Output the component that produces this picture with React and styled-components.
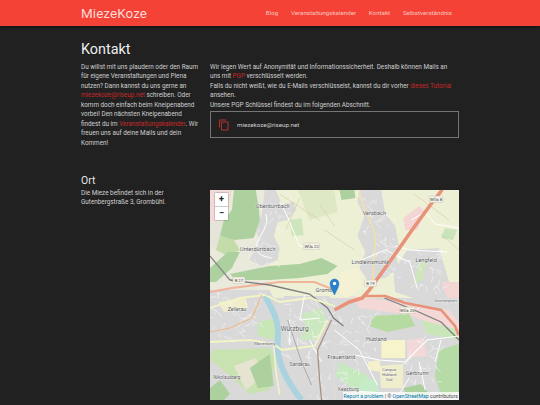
import React from 'react'
import styled, { createGlobalStyle } from 'styled-components'

const GlobalStyle = createGlobalStyle`
  html, body {
    margin: 0;
    padding: 0;
    background: #212121;
    overflow: hidden;
  }
  body {
    font-family: Roboto, "Liberation Sans", sans-serif;
  }
`

const navItems = ['Blog', 'Veranstaltungskalender', 'Kontakt', 'Selbstverständnis']

export default function App() {
  return (
    <Page>
      <GlobalStyle />
      <Header>
        <HeaderInner>
          <Brand>MiezeKoze</Brand>
          <Nav>
            {navItems.map(item => <NavLink key={item}>{item}</NavLink>)}
          </Nav>
        </HeaderInner>
      </Header>

      <Section>
        <Title>Kontakt</Title>
        <Copy>
          Du willst mit uns plaudern oder den Raum für eigene Veranstaltungen und Plena
          nutzen? Dann kannst du uns gerne an <Link>miezekoze@riseup.net</Link> schreiben.
          Oder komm doch einfach beim Kneipenabend vorbei! Den nächsten Kneipenabend
          findest du im <Link>Veranstaltungskalender</Link>. Wir freuen uns auf deine
          Mails und dein Kommen!
        </Copy>
        <div>
          <Copy>
            Wir legen Wert auf Anonymität und Informationssicherheit. Deshalb können Mails an
            uns mit <Link>PGP</Link> verschlüsselt werden.<br />
            Falls du nicht weißt, wie du E-Mails verschlüsselst, kannst du dir vorher <Link>dieses Tutorial</Link> ansehen.<br />
            Unsere PGP Schlüssel findest du im folgenden Abschnitt.
          </Copy>
          <KeyBox>
            <CopyIcon viewBox="0 0 24 24">
              <path d="M16 1H4c-1.1 0-2 .9-2 2v14h2V3h12V1zm3 4H8c-1.1 0-2 .9-2 2v14c0 1.1.9 2 2 2h11c1.1 0 2-.9 2-2V7c0-1.1-.9-2-2-2zm0 16H8V7h11v14z" />
            </CopyIcon>
            <KeyText>miezekoze@riseup.net</KeyText>
          </KeyBox>
        </div>
      </Section>

      <OrtSection>
        <SubTitle>Ort</SubTitle>
        <Copy>Die Mieze befindet sich in der Gutenbergstraße 3, Grombühl.</Copy>
        <MapBox>
          <OsmMap />
          <ZoomControl>
            <ZoomButton>+</ZoomButton>
            <ZoomButton>−</ZoomButton>
          </ZoomControl>
          <Attribution>
            <a>Report a problem</a> | © <a>OpenStreetMap</a> contributors
          </Attribution>
        </MapBox>
      </OrtSection>
    </Page>
  )
}

// flat map areas, page coordinates minus map origin
const areas = [
  ['#eef0d5', 'M60 0H250V110H60Z'],
  ['#dfe8c4', 'M88 0L125 0L128 22L100 30Z'],
  ['#f2dad9', 'M0 0H22L16 30L0 32Z'],
  ['#e4e4d8', 'M0 32L14 30L22 50L8 60L0 56Z'],
  ['#d9d9d9', 'M55 0H66L72 14L84 12L86 20L78 30L68 32L64 46L50 50L46 40L52 24Z'],
  ['#d9d9d9', 'M50 50L64 46L70 58L68 70L52 76L40 70L44 58Z'],
  ['#add19e', 'M24 0H46L49 18L50 30L44 48L24 50L10 46L14 30L22 20Z'],
  ['#c3dcaa', 'M10 46L24 50L30 60L18 66L6 60Z'],
  ['#add19e', 'M0 78L18 62L30 62L22 78L6 92L0 92Z'],
  ['#add19e', 'M20 84L60 76L90 74L112 68L128 76L118 84L90 88L60 90L26 90Z'],
  ['#cfe5bd', 'M80 30L92 28L94 45L82 46Z'],
  ['#d9d9d9', 'M150 0H172L176 24L186 36L190 58L172 70L156 62L148 46L155 26L148 12Z'],
  ['#d9d9d9', 'M156 62L186 62L190 78L176 88L158 90L150 78Z'],
  ['#d9d9d9', 'M198 60L230 58L236 78L240 92L250 100V108L210 110L186 102L184 82Z'],
  ['#f3d5d3', 'M194 28L210 16L216 22L208 40L196 40Z'],
  ['#f3d5d3', 'M232 92L250 92V108L238 108Z'],
  ['#add19e', 'M130 0H145L146 8L132 10Z'],
  ['#cfe5bd', 'M210 72L218 68L214 90L204 94Z'],
  ['#c9e3bb', 'M236 38L248 40L244 50L232 48Z'],
  ['#f4f1d4', 'M132 82L150 78L152 98L136 108L128 100Z'],
  ['#d9d9d9', 'M0 100H60L64 108H125V210H0Z'],
  ['#d9d9d9', 'M125 108H250V210H125Z'],
  ['#f3d8d5', 'M140 106L190 112L240 120L250 132V145L200 125L150 118Z'],
  ['#d9d9d9', 'M74 106H120L128 128L122 180L104 210H92L76 170L74 140Z'],
  ['#cbe8c0', 'M92 124L112 118L118 132L106 150L90 150L96 136Z'],
  ['#f0eeca', 'M8 112L36 108L38 118L14 122Z'],
  ['#c9e6b6', 'M48 132L68 128L66 150L48 146Z'],
  ['#c8e2b0', 'M2 160L60 158L66 170L60 200L40 204L18 184L0 170Z'],
  ['#e6e4d0', 'M24 176L46 168L54 186L36 200Z'],
  ['#add19e', 'M40 178L60 164L64 196L48 198Z'],
  ['#add19e', 'M0 198L10 190L20 204L14 210H0Z'],
  ['#b6dba0', 'M164 126L200 124L206 136L178 142L160 136Z'],
  ['#c8e6b8', 'M212 130L250 140V150L218 144Z'],
  ['#f7f3cb', 'M172 150H196V168H172Z'],
  ['#f3d8d8', 'M198 150L214 148L218 166L198 168Z'],
  ['#f0edcd', 'M170 176L194 174L194 198L172 198Z'],
  ['#f4f1cc', 'M158 172L170 170L172 182L160 180Z'],
  ['#b7dba6', 'M230 160L250 154V202L232 206L226 186Z'],
  ['#c6ebc8', 'M150 188L168 190L170 206L148 206Z'],
  ['#c6e9c0', 'M130 172L160 186L145 200L126 186Z'],
  ['#add19e', 'M194 198L212 194L222 206H198Z'],
]

// residential blocks that get a mesh of side streets
const streetZones = [
  [50, 2, 30, 44], [42, 50, 26, 24], [150, 4, 34, 56], [154, 62, 32, 26], [190, 60, 46, 44],
  [76, 108, 44, 70], [2, 102, 50, 46], [128, 124, 40, 46], [200, 150, 30, 46], [126, 176, 24, 22],
  [98, 178, 24, 30], [170, 112, 40, 12],
]

function streetMesh() {
  let seed = 7
  const rnd = () => {
    seed = (seed * 16807) % 2147483647
    return seed / 2147483647
  }
  const out = []
  streetZones.forEach(([x, y, w, h]) => {
    const count = Math.round((w * h) / 55)
    for (let i = 0; i < count; i++) {
      const x0 = x + rnd() * w
      const y0 = y + rnd() * h
      const x1 = x0 + (rnd() - 0.5) * 14
      const y1 = y0 + (rnd() - 0.5) * 14
      out.push(`M${x0.toFixed(1)} ${y0.toFixed(1)}L${x1.toFixed(1)} ${y1.toFixed(1)}`)
    }
  })
  return out.join('')
}

// road strokes
const roads = [
  ['#fff', 1, 'M56 24C60 34 52 42 48 52C44 60 48 66 62 68'],
  ['#fff', 1, 'M70 12C80 28 84 44 90 56L108 60'],
  ['#f3e0a8', 1.6, 'M150 0C152 18 160 24 166 46C166 66 162 84 164 100'],
  ['#fff', 1, 'M186 56L200 60L238 62'],
  ['#fff', 1, 'M202 30L216 22L226 34L250 38'],
  ['#fff', 1, 'M152 70L176 60L200 72'],
  ['#fff', 1, 'M200 70L208 98'],
  ['#c9c0a0', 0.5, 'M70 4L110 30M90 8L76 40M110 14L125 36M205 4L240 30M232 44L250 60M115 40L145 60'],
  ['#888', 1.2, 'M0 66L10 78L20 90'],
  ['#f0b49c', 2.2, 'M0 102L22 98L70 92L105 92L125 100'],
  ['#e8927a', 3.6, 'M233 0L222 14L205 37L186 64L160 100L153 108L140 112L125 120'],
  ['#e8927a', 2.6, 'M153 106L176 106L196 113L232 120L246 136L250 146'],
  ['#7c7c7c', 1.3, 'M20 90L60 95L100 104L118 118L124 128L134 136'],
  ['#7c7c7c', 1.3, 'M175 108L205 120L232 132L250 150'],
  ['#f4f5c4', 1.8, 'M0 118L30 108L55 105L70 112L100 108L125 116'],
  ['#f0bc8a', 1.2, 'M52 105L42 128L20 138L0 142'],
  ['#f4f5c4', 1.8, 'M0 152L40 150L64 154L72 160L105 156L118 130'],
  ['#f4f5c4', 1.5, 'M64 154L66 180L70 205'],
  ['#fff', 1, 'M80 130L80 155M95 105L90 130L110 128M100 150L112 172'],
  ['#a89080', 1.3, 'M122 130L108 160L110 190L112 210'],
  ['#fff', 1.2, 'M145 165L170 170L196 172L218 150L250 146'],
  ['#fff', 1, 'M125 140L150 160L168 195M130 200L190 204L200 188'],
  ['#fff', 1, 'M210 172L216 200M232 150L226 172'],
  ['#aaa', 1, 'M78 130L92 172L102 195'],
]

const labels = [
  [63, 18, 'Oberdürrbach', 5.6, 'middle'],
  [48, 61, 'Unterdürrbach', 5.6, 'middle'],
  [165, 25, 'Versbach', 5.6, 'middle'],
  [161, 74, 'Lindleinsmühle', 5.6, 'middle'],
  [217, 72, 'Lengfeld', 5.6, 'middle'],
  [106, 102, 'Gromb', 5.6, 'start'],
  [27, 121, 'Zellerau', 5.2, 'middle'],
  [85, 141, 'Würzburg', 6.6, 'middle'],
  [55, 155, 'Marienberg', 4.2, 'middle'],
  [90, 176, 'Sanderau', 4.8, 'middle'],
  [17, 189, 'Nikolausberg', 4.6, 'middle'],
  [167, 151, 'Hubland', 5.6, 'middle'],
  [118, 169, 'Frauenland', 5.6, 'start'],
  [208, 185, 'Gerbrunn', 5.6, 'middle'],
  [139, 201, 'Keesburg', 5, 'middle'],
  [180, 181, 'Campus', 3.8, 'middle'],
  [180, 186, 'Hubland', 3.8, 'middle'],
  [180, 191, 'Süd', 3.8, 'middle'],
  [248, 112, 'Gewerbegebiet', 3.4, 'end'],
]

const shields = [
  [227, 8, 14, 'WÜs 8'],
  [161, 92, 12, 'B 19'],
  [29, 89, 12, 'B 27'],
  [102, 55, 16, 'WÜs 22'],
  [198, 119, 15, 'WÜs 25'],
]

function OsmMap() {
  return (
    <MapSvg viewBox="0 0 250 210" preserveAspectRatio="none">
      <defs>
        <filter id="soft" x="0" y="0" width="100%" height="100%">
          <feGaussianBlur stdDeviation="0.3" />
        </filter>
      </defs>
      <g filter="url(#soft)">
        <rect width="250" height="210" fill="#e9e9dc" />
        {areas.map(([fill, d], i) => <path key={i} d={d} fill={fill} />)}
        <path d={streetMesh()} stroke="#f4f4f4" strokeWidth="0.7" fill="none" />
        <path d="M55 105C62 120 70 128 68 150C66 170 76 190 92 210" stroke="#aad3df" strokeWidth="6" fill="none" />
        {roads.map(([color, width, d], i) => (
          <path key={i} d={d} stroke={color} strokeWidth={width} fill="none" />
        ))}
      </g>
      {labels.map(([x, y, text, size, anchor]) => (
        <text key={text + x} x={x} y={y} fontSize={size} textAnchor={anchor} fill="#555"
          stroke="#fff" strokeWidth="0.5" paintOrder="stroke" fontFamily="Roboto, sans-serif">{text}</text>
      ))}
      {shields.map(([x, y, w, text]) => (
        <g key={text}>
          <rect x={x - w / 2} y={y - 2} width={w} height="6.5" rx="1" fill="#f4f1e8" stroke="#c0b8a0" strokeWidth="0.4" />
          <text x={x} y={y + 2.9} fontSize="4.2" textAnchor="middle" fill="#444" fontFamily="Roboto, sans-serif">{text}</text>
        </g>
      ))}
      <path d="M125 105C122 99 120.5 96.5 120.5 93.5A4.5 4.5 0 0 1 129.5 93.5C129.5 96.5 128 99 125 105Z" fill="#2a81cb" stroke="#1e6fb5" strokeWidth="0.4" />
      <circle cx="125" cy="93.5" r="1.7" fill="#fff" />
    </MapSvg>
  )
}

const Page = styled.div`
  width: 540px;
  height: 405px;
  background: #212121;
  overflow: hidden;
`

const Header = styled.header`
  height: 26px;
  background: #f44336;
  box-shadow: 0 1px 3px rgba(0, 0, 0, 0.5);
`

const HeaderInner = styled.div`
  width: 378px;
  height: 100%;
  margin: 0 auto;
  display: flex;
  align-items: center;
  justify-content: space-between;
`

const Brand = styled.div`
  font-size: 13.4px;
  color: #fbdcd9;
  letter-spacing: 0.1px;
`

const Nav = styled.nav`
  display: flex;
  gap: 12.8px;
  padding-right: 7px;
`

const NavLink = styled.a`
  font-size: 6.2px;
  font-weight: 400;
  color: #f9c4be;
`

const Section = styled.section`
  width: 378px;
  margin: 0 auto;
  display: grid;
  grid-template-columns: 120px 249px;
  column-gap: 9px;
  padding-top: 13.5px;
`

const OrtSection = styled(Section)`
  padding-top: 25.5px;
`

const Title = styled.h1`
  grid-column: 1 / -1;
  margin: 0 0 3px;
  font-size: 14.4px;
  line-height: 20px;
  font-weight: 400;
  color: #eeeeee;
`

const SubTitle = styled.h2`
  grid-column: 1 / -1;
  margin: 0 0 1px;
  font-size: 10.4px;
  line-height: 14px;
  font-weight: 400;
  color: #e8e8e8;
`

const Copy = styled.div`
  font-size: 6.35px;
  line-height: 9.5px;
  color: #d0d0d0;
`

const Link = styled.a`
  color: #c62828;
`

const KeyBox = styled.div`
  box-sizing: border-box;
  height: 27px;
  margin-top: 1px;
  border: 1px solid #757575;
  display: flex;
  align-items: center;
  padding-left: 7px;
`

const CopyIcon = styled.svg`
  width: 12px;
  height: 12px;
  fill: #b3302d;
`

const KeyText = styled.span`
  margin-left: 7px;
  font-size: 6.2px;
  color: #d0d0d0;
`

const MapBox = styled.div`
  position: relative;
  width: 249px;
  height: 210px;
  margin-top: 1px;
  overflow: hidden;
`

const MapSvg = styled.svg`
  display: block;
  width: 100%;
  height: 100%;
`

const ZoomControl = styled.div`
  position: absolute;
  left: 5px;
  top: 3px;
  width: 13px;
  display: flex;
  flex-direction: column;
  border-radius: 1px;
  box-shadow: 0 0 0 1px rgba(0, 0, 0, 0.15);
`

const ZoomButton = styled.div`
  height: 13px;
  background: #fff;
  color: #222;
  font-size: 9px;
  font-weight: 700;
  line-height: 13px;
  text-align: center;
  border-bottom: 1px solid #ccc;
  &:last-child {
    border-bottom: 0;
  }
`

const Attribution = styled.div`
  position: absolute;
  right: 0;
  bottom: 0;
  padding: 0 1px;
  background: rgba(255, 255, 255, 0.75);
  font-size: 5.2px;
  line-height: 8px;
  color: #444;
  a {
    color: #0078a8;
  }
`
